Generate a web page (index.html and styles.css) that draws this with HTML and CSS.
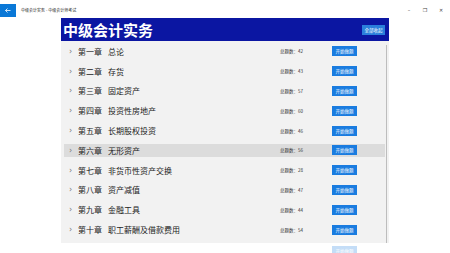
FILE: index.html
```html
<!DOCTYPE html>
<html lang="zh-CN">
<head>
  <meta charset="UTF-8" />
  <title>中级会计实务 - 中级会计师考试</title>
  <link rel="stylesheet" href="styles.css">
</head>
<body>

  <div class="titlebar">
    <div class="back">
      <svg width="6" height="5" viewBox="0 0 6 5"><path d="M2.5 0.5 L0.5 2.5 L2.5 4.5 M0.5 2.5 H5.5" fill="none" stroke="#fff" stroke-width="0.8"/></svg>
    </div>
    <div class="app-title">中级会计实务 - 中级会计师考试</div>
    <div class="win-controls">
      <span class="ctl">&#8211;</span>
      <span class="ctl">&#10064;</span>
      <span class="ctl">&#10005;</span>
    </div>
  </div>

  <div class="panel">
    <div class="panel-head">
      <h1>中级会计实务</h1>
      <button class="collapse-btn">全部收起</button>
    </div>

    <div class="list-wrap">
      <div class="chapter-list" id="chapters">
        <!-- rows are added by the script below -->
      </div>
      <div class="scroll-track"><div class="scroll-thumb"></div></div>
    </div>

    <div class="peek">
      <span class="btn">开始做题</span>
    </div>
  </div>

  <script>
    const chapters = [
      ["第一章", "总论", 42],
      ["第二章", "存货", 43],
      ["第三章", "固定资产", 57],
      ["第四章", "投资性房地产", 60],
      ["第五章", "长期股权投资", 46],
      ["第六章", "无形资产", 56],
      ["第七章", "非货币性资产交换", 28],
      ["第八章", "资产减值", 47],
      ["第九章", "金融工具", 44],
      ["第十章", "职工薪酬及借款费用", 54]
    ];

    const list = document.getElementById('chapters');

    chapters.forEach(([no, name, count], i) => {
      const row = document.createElement('div');
      row.className = 'chapter-row' + (i === 5 ? ' active' : '');
      row.innerHTML = `
        <span class="chevron">›</span>
        <span class="no">${no}</span>
        <span class="name">${name}</span>
        <span class="count">总题数：${count}</span>
        <span class="btn">开始做题</span>
      `;
      list.appendChild(row);
    });
  </script>
</body>
</html>
```

FILE: styles.css
```css
body {
  font-family: "Noto Sans CJK SC", "Noto Sans", sans-serif;
  background: #ffffff;
  margin: 0;
  padding: 0;
  width: 450px;
  height: 253px;
  overflow: hidden;
}

.titlebar {
  display: flex;
  align-items: center;
  height: 18px;
  padding-top: 4px;
  box-sizing: border-box;
  align-items: flex-start;
}

.back {
  width: 16px;
  height: 13px;
  background: #0a78d7;
  display: flex;
  align-items: center;
  justify-content: center;
}

.app-title {
  font-size: 4px;
  line-height: 13px;
  color: #222;
  margin-left: 5px;
}

.win-controls {
  margin-left: auto;
  display: flex;
  gap: 10px;
  margin-right: 6px;
  line-height: 13px;
}

.ctl {
  font-size: 5px;
  color: #444;
  width: 6px;
  text-align: center;
  font-family: "DejaVu Sans", sans-serif;
}

.panel {
  margin-left: 61px;
  width: 328px;
}

.panel-head {
  display: flex;
  align-items: center;
  height: 23px;
  background: #0b16a2;
  padding: 0 4px 0 2px;
}

h1 {
  margin: 0;
  font-size: 15px;
  font-weight: bold;
  color: #ffffff;
  line-height: 23px;
}

.collapse-btn {
  margin-left: auto;
  border: none;
  background: #2a7fdc;
  color: #fff;
  font-family: inherit;
  font-size: 4.5px;
  width: 23px;
  height: 10px;
  padding: 0;
}

.list-wrap {
  display: flex;
  background: #f2f2f2;
  height: 202px;
}

.chapter-list {
  flex: 1;
  display: flex;
  flex-direction: column;
  padding: 4px 0 0 3px;
}

.chapter-row {
  display: flex;
  align-items: center;
  height: 13px;
  margin-bottom: 7px;
  padding-left: 5px;
  font-size: 8px;
  color: #222;
}

.chapter-row.active {
  background: #dcdcdc;
}

.chevron {
  width: 9px;
  color: #777;
  font-size: 8px;
  font-family: "DejaVu Sans", sans-serif;
}

.no {
  width: 30px;
}

.name {
  width: 172px;
}

.count {
  width: 52px;
  font-size: 4.5px;
  color: #333;
}

.btn {
  display: inline-flex;
  align-items: center;
  justify-content: center;
  width: 25px;
  height: 10px;
  background: #1a7ce0;
  color: #fff;
  font-size: 4.5px;
}

.scroll-track {
  width: 3px;
  padding-top: 4px;
  margin-left: 1px;
}

.scroll-thumb {
  width: 1px;
  height: 198px;
  background: #bdbdbd;
}

.peek {
  display: flex;
  padding: 3px 0 0 271px;
  opacity: 0.25;
}
```
